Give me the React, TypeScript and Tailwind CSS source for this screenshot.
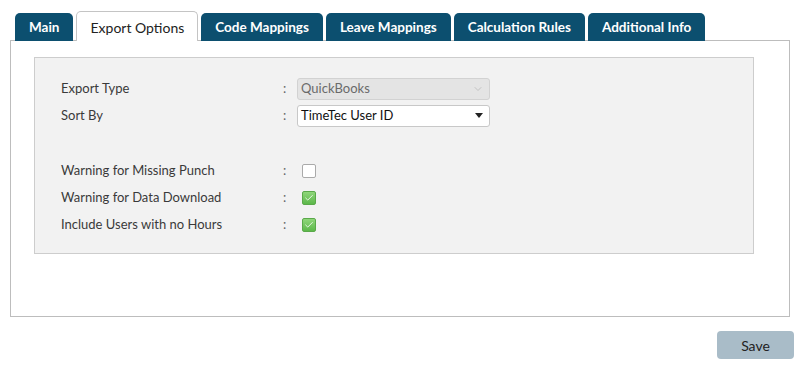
import { Check, ChevronDown } from 'lucide-react'

const tabs = ["Main", "Export Options", "Code Mappings", "Leave Mappings", "Calculation Rules", "Additional Info"]

function Row({ label, children }: { label: string; children: React.ReactNode }) {
  return (
    <div className="flex items-center h-[27px]">
      <div className="w-[222px] text-[13px] text-[#3a3a3a]">{label}</div>
      <div className="w-[14px] text-[13px] text-[#666]">:</div>
      <div className="flex items-center">{children}</div>
    </div>
  )
}

function Box({ checked }: { checked: boolean }) {
  return checked ? (
    <span className="ml-[5px] flex h-[14px] w-[14px] items-center justify-center rounded-[2px] border border-[#5aa94a] bg-gradient-to-b from-[#8fd67a] to-[#5cb84a]">
      <Check className="h-[10px] w-[10px] text-white" strokeWidth={2} />
    </span>
  ) : (
    <span className="ml-[5px] block h-[14px] w-[14px] rounded-[2px] border border-[#aaa] bg-white" />
  )
}

export default function App() {
  return (
    <div className="w-[800px] h-[376px] bg-white pt-[12px]" style={{ fontFamily: '"Lato", "Open Sans", sans-serif' }}>
      <div className="flex items-end gap-[3px] pl-[15px] h-[29px] relative z-10">
        {tabs.map((t) =>
          t === "Export Options" ? (
            <div
              key={t}
              className="h-[30px] px-[13px] pt-[1px] flex items-center rounded-t-[5px] border border-b-0 border-[#c4c4c4] bg-white text-[14px] text-[#222]"
            >
              {t}
            </div>
          ) : (
            <div
              key={t}
              className="h-[28px] px-[14px] pt-[1px] flex items-center rounded-t-[5px] bg-[#0c4f6f] text-[13.5px] font-bold text-white"
            >
              {t}
            </div>
          )
        )}
      </div>
      <div className="mx-[10px] -mt-px h-[277px] border border-[#bdbdbd] bg-white px-[23px] pt-[16px]">
        <div className="h-[197px] w-[720px] border border-[#cdcdcd] bg-[#f2f2f2] pl-[26px] pt-[17px]">
          <Row label="Export Type">
            <div className="flex h-[22px] w-[193px] items-center justify-between rounded-[3px] border border-[#d2d2d2] bg-[#e4e4e4] pl-[3px] pr-[5px] text-[13px] text-[#6a6a6a]">
              QuickBooks
              <ChevronDown className="h-[12px] w-[12px] text-[#b5b5b5]" strokeWidth={1.5} />
            </div>
          </Row>
          <Row label="Sort By">
            <div className="flex h-[22px] w-[193px] items-center justify-between rounded-[3px] border border-[#c8c8c8] bg-white pl-[3px] pr-[6px] text-[13px] text-[#111]">
              TimeTec User ID
              <svg width="8" height="5" viewBox="0 0 8 5">
                <path d="M0 0h8L4 5z" fill="#222" />
              </svg>
            </div>
          </Row>
          <div className="h-[28px]" />
          <div className="flex flex-col">
            <Row label="Warning for Missing Punch">
              <Box checked={false} />
            </Row>
            <Row label="Warning for Data Download">
              <Box checked />
            </Row>
            <Row label="Include Users with no Hours">
              <Box checked />
            </Row>
          </div>
        </div>
      </div>
      <div className="flex justify-end pr-[6px] pt-[14px]">
        <button className="h-[28px] w-[77px] rounded-[4px] bg-[#a9bcc8] text-[14px] text-[#222]">Save</button>
      </div>
    </div>
  )
}
